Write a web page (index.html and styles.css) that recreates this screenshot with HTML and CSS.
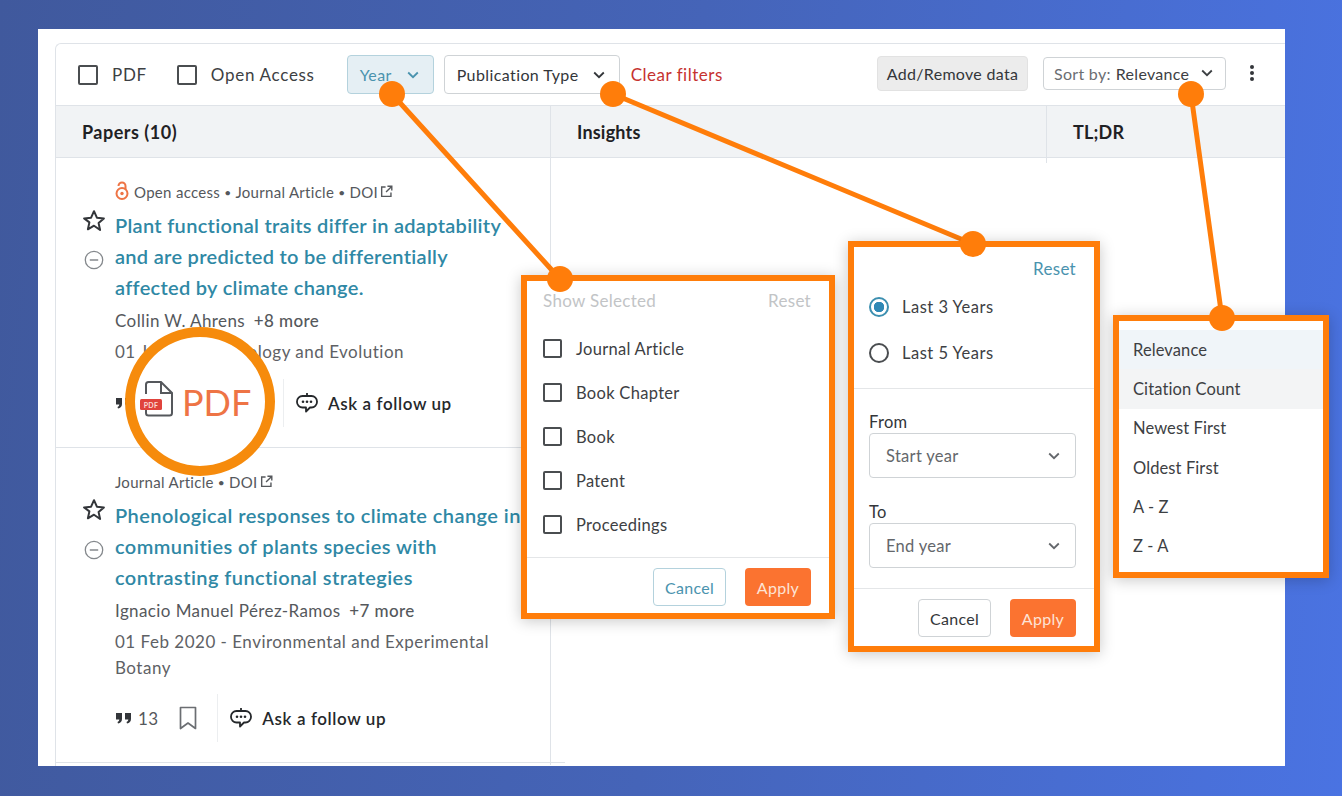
FILE: index.html
```html
<!DOCTYPE html>
<html lang="en">
<head>
    <meta charset="UTF-8">
    <title>Paper filters</title>
    <link rel="stylesheet" href="styles.css">
</head>
<body>
    <svg class="icon-defs" width="0" height="0">
        <symbol id="i-star" viewBox="0 0 24 24"><path d="M12 2.200l2.900 6.500 7 .7-5.300 4.700 1.500 6.900L12 16.700 5.900 20.300l1.500-6.900L2.100 9.400l7-.7z" fill="none" stroke="currentColor" stroke-width="2" stroke-linejoin="round"/></symbol>
        <symbol id="i-minus" viewBox="0 0 20 20"><circle cx="10" cy="10" r="8.700" fill="none" stroke="currentColor" stroke-width="1.300"/><path d="M5.800 10h8.400" stroke="currentColor" stroke-width="1.500"/></symbol>
        <symbol id="i-link" viewBox="0 0 14 14"><path d="M6 2.200H1.800v10h10V8M8 1.300h4.700V6M12.500 1.500L6.500 7.500" fill="none" stroke="currentColor" stroke-width="1.500"/></symbol>
        <symbol id="i-quote" viewBox="0 0 17 12"><path d="M1 1h6v6c0 2.500-1.500 4-4 4.500L2.500 10C3.700 9.600 4.300 8.800 4.300 7.600H1zM10 1h6v6c0 2.500-1.500 4-4 4.500L11.500 10c1.200-.4 1.800-1.200 1.800-2.400H10z" fill="currentColor"/></symbol>
        <symbol id="i-bookmark" viewBox="0 0 20 24"><path d="M2.500 1.500h15v21L10 17l-7.500 5.500z" fill="none" stroke="currentColor" stroke-width="1.700" stroke-linejoin="round"/></symbol>
        <symbol id="i-chat" viewBox="0 0 22 22"><path d="M11 1v3M6.500 4h9a5.500 5.500 0 0 1 5.500 5.500v.500a5.500 5.500 0 0 1-5.500 5.500h-1.500L10 19.500v-4H6.500A5.500 5.500 0 0 1 1 10v-.500A5.500 5.500 0 0 1 6.500 4z" fill="none" stroke="currentColor" stroke-width="1.800" stroke-linejoin="round"/><circle cx="7" cy="9.800" r="1.300" fill="currentColor"/><circle cx="11" cy="9.800" r="1.300" fill="currentColor"/><circle cx="15" cy="9.800" r="1.300" fill="currentColor"/></symbol>
        <symbol id="i-chevron" viewBox="0 0 12 8"><path d="M1.200 1.500L6 6.200l4.800-4.700" fill="none" stroke="currentColor" stroke-width="1.800"/></symbol>
    </svg>

    <div class="canvas">
        <div class="card">
            <div class="toolbar">
                <label class="check"><span class="box"></span>PDF</label>
                <label class="check check-open"><span class="box"></span>Open Access</label>
                <button class="filter filter-active">Year <svg class="chev"><use href="#i-chevron"/></svg></button>
                <button class="filter filter-type">Publication Type <svg class="chev"><use href="#i-chevron"/></svg></button>
                <a class="clear">Clear filters</a>
                <button class="add-data">Add/Remove data</button>
                <button class="sort"><span class="sort-label">Sort by:</span> Relevance <svg class="chev"><use href="#i-chevron"/></svg></button>
                <span class="kebab"><i></i><i></i><i></i></span>
            </div>

            <div class="heads">
                <div class="head head-papers">Papers (10)</div>
                <div class="head head-insights">Insights</div>
                <div class="head head-tldr">TL;DR</div>
            </div>

            <div class="papers">
                <article class="paper paper-first">
                    <div class="side">
                        <svg class="star"><use href="#i-star"/></svg>
                        <svg class="minus"><use href="#i-minus"/></svg>
                    </div>
                    <div class="body">
                        <div class="meta">
                            <svg class="oa" viewBox="0 0 14 20"><path d="M10.500 8V5a3.500 3.500 0 0 0-7 0" fill="none" stroke="#ee7445" stroke-width="2"/><circle cx="7" cy="12.500" r="5.500" fill="none" stroke="#ee7445" stroke-width="2"/><circle cx="7" cy="12.500" r="1.700" fill="#ee7445"/></svg>
                            Open access <b>•</b> Journal Article <b>•</b> DOI <svg class="ext"><use href="#i-link"/></svg>
                        </div>
                        <h3>Plant functional traits differ in adaptability<br>and are predicted to be differentially<br>affected by climate change.</h3>
                        <p class="authors">Collin W. Ahrens <strong>+8 more</strong></p>
                        <p class="journal">01 Jan 2022 - Ecology and Evolution</p>
                        <div class="actions">
                            <svg class="quote"><use href="#i-quote"/></svg>
                            <span class="pdf-slot"></span>
                            <span class="rule"></span>
                            <a class="ask"><svg class="chat"><use href="#i-chat"/></svg>Ask a follow up</a>
                        </div>
                    </div>
                </article>
                <article class="paper paper-second">
                    <div class="side">
                        <svg class="star"><use href="#i-star"/></svg>
                        <svg class="minus"><use href="#i-minus"/></svg>
                    </div>
                    <div class="body">
                        <div class="meta">Journal Article <b>•</b> DOI <svg class="ext"><use href="#i-link"/></svg></div>
                        <h3>Phenological responses to climate change in<br>communities of plants species with<br>contrasting functional strategies</h3>
                        <p class="authors">Ignacio Manuel Pérez-Ramos <strong>+7 more</strong></p>
                        <p class="journal">01 Feb 2020 - Environmental and Experimental Botany</p>
                        <div class="actions">
                            <svg class="quote"><use href="#i-quote"/></svg>
                            <span class="count">13</span>
                            <svg class="mark"><use href="#i-bookmark"/></svg>
                            <span class="rule"></span>
                            <a class="ask"><svg class="chat"><use href="#i-chat"/></svg>Ask a follow up</a>
                        </div>
                    </div>
                </article>
            </div>
        </div>
    </div>

    <!-- callouts lying over the screenshot -->
    <svg class="lines" width="1342" height="796">
        <path d="M392 94L560 279M613 94L973 244M1191 94L1222 318" stroke="#ff7d0a" stroke-width="5" fill="none"/>
    </svg>

    <div class="popup popup-type">
        <div class="popup-top muted"><span>Show Selected</span><span>Reset</span></div>
        <div class="type-list">
            <label class="check-row"><span class="box box-sm"></span>Journal Article</label>
            <label class="check-row"><span class="box box-sm"></span>Book Chapter</label>
            <label class="check-row"><span class="box box-sm"></span>Book</label>
            <label class="check-row"><span class="box box-sm"></span>Patent</label>
            <label class="check-row"><span class="box box-sm"></span>Proceedings</label>
        </div>
        <div class="popup-foot">
            <button class="btn btn-teal">Cancel</button>
            <button class="btn btn-apply">Apply</button>
        </div>
    </div>

    <div class="popup popup-year">
        <div class="year-reset">Reset</div>
        <div class="radios">
            <label class="radio-row"><span class="radio radio-on"></span>Last 3 Years</label>
            <label class="radio-row"><span class="radio"></span>Last 5 Years</label>
        </div>
        <div class="range">
            <div class="field-label">From</div>
            <div class="select">Start year <svg class="chev"><use href="#i-chevron"/></svg></div>
            <div class="field-label field-to">To</div>
            <div class="select">End year <svg class="chev"><use href="#i-chevron"/></svg></div>
        </div>
        <div class="popup-foot">
            <button class="btn">Cancel</button>
            <button class="btn btn-apply">Apply</button>
        </div>
    </div>

    <div class="popup popup-sort">
        <div class="sort-item sort-first">Relevance</div>
        <div class="sort-item sort-hover">Citation Count</div>
        <div class="sort-item">Newest First</div>
        <div class="sort-item">Oldest First</div>
        <div class="sort-item">A - Z</div>
        <div class="sort-item">Z - A</div>
    </div>

    <span class="dot dot-year"></span>
    <span class="dot dot-type"></span>
    <span class="dot dot-sort"></span>
    <span class="dot dot-popup-type"></span>
    <span class="dot dot-popup-year"></span>
    <span class="dot dot-popup-sort"></span>

    <div class="pdf-circle">
        <svg class="pdf-file" viewBox="0 0 34 38">
            <path d="M6 14V4.500A2.500 2.500 0 0 1 8.500 2H21l11 11v20a2.500 2.500 0 0 1-2.500 2.500h-21A2.500 2.500 0 0 1 6 33v-3M21 2v11h11" fill="none" stroke="#55585c" stroke-width="2"/>
            <rect x="0" y="19" width="22" height="11" rx="1.500" fill="#e0433c"/>
            <text x="11" y="27.500" text-anchor="middle" class="pdf-tag">PDF</text>
        </svg>
        <span class="pdf-word">PDF</span>
    </div>
</body>
</html>
```

FILE: styles.css
```css
* {
    box-sizing: border-box;
}
html, body {
    margin: 0;
    height: 796px;
    overflow: hidden;
}
body {
    position: relative;
    padding: 29px 57px 30px 38px;
    background: linear-gradient(95deg, #40599d 0%, #4564b8 50%, #4a73e2 100%);
    font-family: Lato, "Open Sans", sans-serif;
    font-size: 16px;
    letter-spacing: 0.3px;
    color: #3d4043;
}
button {
    font-family: inherit;
    letter-spacing: inherit;
    cursor: pointer;
}
.icon-defs {
    position: absolute;
}
.canvas {
    height: 737px;
    padding: 14px 0 0 17px;
    background: #fff;
    overflow: hidden;
}
.card {
    height: 100%;
    border: 1px solid #dfe3e8;
    border-right: none;
    border-bottom: none;
    border-top-left-radius: 6px;
}

/* toolbar */
.toolbar {
    display: flex;
    align-items: center;
    height: 61px;
    padding-left: 22px;
    color: #3d4043;
}
.check {
    display: flex;
    align-items: center;
    gap: 14px;
    font-size: 17px;
    letter-spacing: 0.7px;
}
.check-open {
    margin-left: 30px;
}
.box {
    display: inline-block;
    width: 20px;
    height: 20px;
    border: 2px solid #4a4d50;
    border-radius: 2px;
}
.box-sm {
    width: 19px;
    height: 19px;
}
.chev {
    width: 12px;
    height: 8px;
}
.filter {
    display: flex;
    align-items: center;
    justify-content: space-between;
    height: 39px;
    padding: 0 14px 0 12px;
    font-size: 16px;
    letter-spacing: 0.4px;
    background: #fff;
    border: 1px solid #cfd3d6;
    border-radius: 4px;
    color: #33363a;
}
.filter-active {
    width: 87px;
    margin-left: 32px;
    background: #e5eff4;
    border-color: #b4d2dd;
    color: #4a93ae;
}
.filter-type {
    width: 176px;
    margin-left: 10px;
}
.clear {
    margin-left: 11px;
    font-size: 17px;
    letter-spacing: 0.5px;
    color: #c6322f;
}
.add-data {
    height: 35px;
    width: 151px;
    margin-left: auto;
    margin-top: -3px;
    padding: 0;
    font-size: 16px;
    background: #ececec;
    border: 1px solid #e2e2e2;
    border-radius: 4px;
    color: #33363a;
}
.sort {
    display: flex;
    align-items: center;
    gap: 5px;
    width: 183px;
    height: 33px;
    margin-left: 15px;
    margin-top: -3px;
    padding: 0 12px 0 10px;
    font-size: 16px;
    background: #fff;
    border: 1px solid #cfd3d6;
    border-radius: 4px;
    color: #3d4043;
    white-space: nowrap;
}
.sort .chev {
    margin-left: auto;
}
.sort-label {
    color: #6b6e72;
}
.kebab {
    display: flex;
    flex-direction: column;
    gap: 2px;
    margin: -3px 31px 0 24px;
}
.kebab i {
    width: 4px;
    height: 4px;
    border-radius: 50%;
    background: #33363a;
}

/* column heads */
.heads {
    display: flex;
    height: 53px;
    background: #f1f3f5;
    border-top: 1px solid #dfe3e8;
    border-bottom: 1px solid #dfe3e8;
    font-size: 18px;
    letter-spacing: 0.2px;
    font-weight: 700;
    color: #1f2124;
}
.head {
    display: flex;
    align-items: center;
    padding-left: 26px;
}
.head-papers {
    width: 495px;
    letter-spacing: 0.5px;
    border-right: 1px solid #dfe3e8;
}
.head-insights {
    width: 496px;
    position: relative;
}
.head-insights::after {
    content: "";
    position: absolute;
    right: 0;
    top: 0;
    bottom: -6px;
    width: 1px;
    background: #dfe3e8;
}

/* papers */
.papers {
    width: 495px;
    height: 607px;
    border-right: 1px solid #dfe3e8;
}
.paper {
    display: flex;
    height: 290px;
    border-bottom: 1px solid #dfe3e8;
}
.paper-second {
    height: 315px;
    margin-right: -15px;
}
.side {
    display: flex;
    flex-direction: column;
    align-items: center;
    flex: none;
    width: 59px;
    padding-left: 16px;
    padding-top: 51px;
    color: #33363a;
}
.paper-second .side {
    padding-top: 50px;
}
.star {
    width: 24px;
    height: 24px;
}
.minus {
    width: 20px;
    height: 20px;
    margin-top: 17px;
    color: #84888c;
}
.paper-second .minus {
    margin-top: 18px;
}
.body {
    flex: 1;
    min-width: 0;
    padding-top: 24px;
}
.meta {
    display: flex;
    align-items: center;
    gap: 4px;
    height: 20px;
    font-size: 15px;
    color: #55585c;
}
.meta b {
    font-size: 12px;
    font-weight: 400;
}
.oa {
    width: 14px;
    height: 20px;
    margin-right: 1px;
    margin-top: -3px;
}
.ext {
    width: 13px;
    height: 13px;
    margin-left: -2px;
    margin-top: -2px;
}
h3 {
    margin: 8px 0 0;
    font-size: 20px;
    line-height: 31px;
    font-weight: 600;
    white-space: nowrap;
    color: #2f88a5;
}
.paper-second h3 {
    letter-spacing: 0.42px;
}
.authors {
    margin: 6px 0 0;
    font-size: 17px;
    line-height: 24px;
    letter-spacing: 0.4px;
    color: #55585c;
}
.authors strong {
    margin-left: 4px;
    font-weight: 500;
}
.journal {
    margin: 6px 0 0;
    font-size: 17px;
    line-height: 26px;
    letter-spacing: 0.5px;
    color: #5e6165;
    padding-right: 40px;
}
.actions {
    display: flex;
    align-items: center;
    height: 48px;
    margin-top: 14px;
}
.paper-second .actions {
    margin-top: 13px;
}
.quote {
    width: 17px;
    height: 12px;
    color: #33363a;
}
.count {
    margin-left: 6px;
    font-size: 17px;
    color: #55585c;
}
.mark {
    width: 20px;
    height: 24px;
    margin-left: 20px;
    color: #6b6e72;
}
.pdf-slot {
    width: 132px;
}
.rule {
    width: 1px;
    height: 48px;
    margin-left: 19px;
    background: #eceef0;
}
.ask {
    display: flex;
    align-items: center;
    gap: 10px;
    margin-left: 12px;
    font-size: 17px;
    letter-spacing: 0.6px;
    font-weight: 600;
    color: #25282b;
}
.chat {
    width: 22px;
    height: 22px;
}

/* overlays */
.lines {
    position: absolute;
    left: 0;
    top: 0;
}
.dot {
    position: absolute;
    width: 26px;
    height: 26px;
    margin: -13px 0 0 -13px;
    border-radius: 50%;
    background: #ff7d0a;
}
.dot-year { left: 392px; top: 94px; }
.dot-type { left: 613px; top: 94px; }
.dot-sort { left: 1191px; top: 94px; }
.dot-popup-type { left: 560px; top: 279px; }
.dot-popup-year { left: 973px; top: 244px; }
.dot-popup-sort { left: 1222px; top: 318px; }

.popup {
    position: absolute;
    background: #fff;
    border: 6px solid #ff7d0a;
    box-shadow: 0 2px 14px rgba(0, 0, 0, 0.22);
    color: #3d4043;
}
.popup-type {
    left: 521px;
    top: 275px;
    width: 314px;
    height: 344px;
}
.popup-top {
    display: flex;
    justify-content: space-between;
    padding: 10px 18px 0 16px;
    font-size: 17px;
    line-height: 20px;
}
.muted {
    color: #c2c4c6;
}
.type-list {
    display: flex;
    flex-direction: column;
    gap: 23px;
    height: 247px;
    padding: 27px 0 0 16px;
    border-bottom: 1px solid #e4e6e8;
}
.check-row {
    display: flex;
    align-items: center;
    gap: 14px;
    height: 21px;
    font-size: 16.500px;
}
.popup-foot {
    display: flex;
    justify-content: flex-end;
    gap: 19px;
    padding: 10px 18px 0 0;
}
.btn {
    width: 73px;
    height: 38px;
    padding: 0;
    font-size: 16px;
    background: #fff;
    border: 1px solid #cfd3d6;
    border-radius: 4px;
    color: #33363a;
}
.btn-teal {
    border-color: #b4d2dd;
    color: #4a93ae;
}
.btn-apply {
    width: 66px;
    background: #fb7330;
    border: none;
    color: #fde3d6;
}
.popup-year {
    left: 848px;
    top: 241px;
    width: 252px;
    height: 411px;
}
.year-reset {
    padding: 12px 18px 0 0;
    text-align: right;
    font-size: 17px;
    line-height: 20px;
    color: #4a93ae;
}
.radios {
    display: flex;
    flex-direction: column;
    gap: 25px;
    height: 110px;
    padding: 17px 0 0 15px;
    border-bottom: 1px solid #e4e6e8;
}
.radio-row {
    display: flex;
    align-items: center;
    gap: 13px;
    height: 21px;
    font-size: 16.500px;
    letter-spacing: 0.5px;
}
.radio {
    width: 20px;
    height: 20px;
    border: 2px solid #4a4d50;
    border-radius: 50%;
}
.radio-on {
    border-color: #3c8fb0;
    background: radial-gradient(circle, #2f88b5 0 5px, #fff 5.500px);
}
.range {
    height: 200px;
    padding: 23px 18px 0 15px;
    border-bottom: 1px solid #e4e6e8;
}
.field-label {
    font-size: 16.500px;
    line-height: 21px;
    color: #33363a;
}
.field-to {
    margin-top: 24px;
}
.select {
    display: flex;
    align-items: center;
    justify-content: space-between;
    height: 45px;
    padding: 0 15px 0 16px;
    font-size: 16.500px;
    border: 1px solid #cfd3d6;
    border-radius: 4px;
    color: #64676b;
}
.popup-sort {
    left: 1113px;
    top: 315px;
    width: 216px;
    height: 263px;
    padding-top: 9px;
}
.sort-item {
    display: flex;
    align-items: center;
    height: 39.300px;
    padding-left: 14px;
    font-size: 16.500px;
    letter-spacing: 0.1px;
}
.sort-first {
    background: #f0f5f9;
}
.sort-hover {
    background: #f3f4f5;
}

.pdf-circle {
    position: absolute;
    left: 125px;
    top: 327px;
    display: flex;
    align-items: center;
    gap: 8px;
    width: 150px;
    height: 149px;
    padding-left: 5px;
    background: #fff;
    border: 10px solid #f68b0c;
    border-radius: 50%;
}
.pdf-file {
    width: 34px;
    height: 38px;
    margin-top: -6px;
}
.pdf-tag {
    font-family: Lato, sans-serif;
    font-size: 7px;
    font-weight: 700;
    fill: #fbd9d5;
}
.pdf-word {
    font-size: 36px;
    letter-spacing: 0;
    color: #ee7445;
}
```
